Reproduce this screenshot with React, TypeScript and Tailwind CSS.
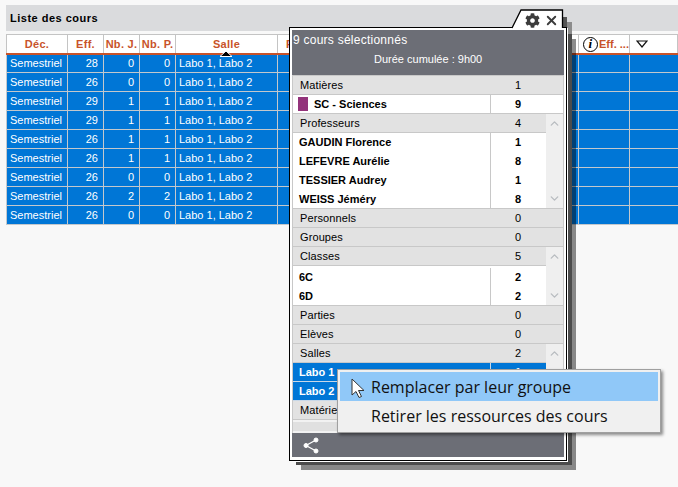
import { X, ChevronUp, ChevronDown } from 'lucide-react';
import { FaCog } from 'react-icons/fa';

const font = "font-['Liberation_Sans',Arial,sans-serif]";

const rows = [
  ['28', '0', '0'],
  ['26', '0', '0'],
  ['29', '1', '1'],
  ['29', '1', '1'],
  ['26', '1', '1'],
  ['26', '1', '1'],
  ['26', '0', '0'],
  ['26', '2', '2'],
  ['26', '0', '0'],
];

const HeadCell = ({ className, children }: { className: string; children: React.ReactNode }) => (
  <div className={`${className} flex h-full items-center justify-center border-r border-[#c4c4c4] text-[11px] font-bold tracking-[0.3px] text-[#c8532a]`}>
    {children}
  </div>
);

const BodyCell = ({ className, children }: { className?: string; children?: React.ReactNode }) => (
  <div className={`${className} flex h-full items-center border-r border-[#c4c8cc] pl-[3px] pr-[5px] text-[11px] text-white`}>
    {children}
  </div>
);

const Section = ({ label, count }: { label: string; count: string }) => (
  <div className="flex h-[19px] shrink-0 items-center border-b border-[#c8c8c8] bg-[#e2e2e2] text-[11px] tracking-[0.1px] text-black">
    <span className="w-[198px] pl-[7px]">{label}</span>
    <span className="w-[54px] text-center">{count}</span>
  </div>
);

const ItemRow = ({ label, count, selected }: { label: string; count: string; selected?: boolean }) => (
  <div className={`flex h-[19px] items-center text-[11px] font-bold ${selected ? 'border-b border-[#c8d8e8] bg-[#0076d6] text-white' : 'border-[#c8c8c8] bg-white text-black last:border-b'}`}>
    <span className={`h-full w-[198px] border-r pl-[6px] leading-[18px] ${selected ? 'border-[#c8d8e8]' : 'border-[#c8c8c8]'}`}>{label}</span>
    <span className="w-[54px] text-center">{count}</span>
  </div>
);

const ScrollBlock = ({ title, count, items, selected, listClass }: { title: string; count: string; items: [string, string][]; selected?: boolean; listClass?: string }) => (
  <div className="flex shrink-0">
    <div className="w-[253px]">
      <Section label={title} count={count} />
      <div className={listClass}>
        {items.map(([label, c]) => (
          <ItemRow key={label} label={label} count={c} selected={selected} />
        ))}
      </div>
    </div>
    <div className="flex w-[17px] flex-col items-center justify-between border-b border-[#c8c8c8] bg-[#efefef] py-[3px] text-[#b8bcc0]">
      <ChevronUp size={13} strokeWidth={2.5} />
      <ChevronDown size={13} strokeWidth={2.5} />
    </div>
  </div>
);

export default function App() {
  return (
    <div className={`${font} relative h-[487px] w-[678px] overflow-hidden bg-[#f8f8f8] pt-[5px]`}>
      <div className="ml-[6px] flex h-[26px] items-center bg-[#dadbdd] pl-[4px] text-[11px] font-bold tracking-[0.5px] text-black">
        Liste des cours
      </div>

      <div className="ml-[6px] mt-[3px]">
        <div className="flex h-[19px] border-x border-t border-[#c4c4c4] bg-white">
          <HeadCell className="w-[61px]">Déc.</HeadCell>
          <HeadCell className="w-[36px]">Eff.</HeadCell>
          <HeadCell className="w-[36px]">Nb. J.</HeadCell>
          <HeadCell className="w-[36px]">Nb. P.</HeadCell>
          <HeadCell className="w-[102px]">Salle</HeadCell>
          <HeadCell className="w-[301px]">
            <span className="mr-auto pl-[8px]">P</span>
          </HeadCell>
          <HeadCell className="w-[51px] !justify-start pl-[4px]">
            <span className="mr-[1px] flex h-[15px] w-[15px] shrink-0 items-center justify-center rounded-full border-[1.5px] border-black font-['Liberation_Serif',serif] text-[13px] font-bold italic text-black">i</span>
            <span className="tracking-normal">Eff. ...</span>
          </HeadCell>
          <div className="flex flex-1 items-center justify-center pr-[24px]">
            <svg width="12" height="8" viewBox="0 0 12 8">
              <path d="M1 1h10L6 7z" fill="none" stroke="#111" strokeWidth="1.200" />
            </svg>
          </div>
        </div>
        <div className="h-[2px] bg-[#c8532a]" />
        {rows.map((r, i) => (
          <div key={i} className={`flex border-b border-l border-[#c4c8cc] bg-[#0076d6] ${i === 0 ? 'h-[18px]' : 'h-[19px]'}`}>
            <BodyCell className="w-[61px]">Semestriel</BodyCell>
            <BodyCell className="w-[36px] justify-end">{r[0]}</BodyCell>
            <BodyCell className="w-[36px] justify-end">{r[1]}</BodyCell>
            <BodyCell className="w-[36px] justify-end">{r[2]}</BodyCell>
            <BodyCell className="w-[102px]">Labo 1, Labo 2</BodyCell>
            <BodyCell className="w-[301px]" />
            <BodyCell className="w-[51px]" />
          </div>
        ))}
      </div>

      {/* sort arrow on the Salle column */}
      <svg className="absolute left-[219px] top-[50px]" width="14" height="7" viewBox="0 0 14 7">
        <path d="M1 6.500 7 1l6 5.500z" fill="#000" stroke="#fff" strokeWidth="1" />
      </svg>

      {/* stacked shadows of the floating panel, each with its tab */}
      <div className="absolute left-[530px] top-[22px] h-[17px] w-[42px] bg-[#8c8c8c]" />
      <div className="absolute left-[301px] top-[39px] h-[431px] w-[275px] bg-[rgba(0,0,0,0.45)]" />
      <div className="absolute left-[525px] top-[17px] h-[17px] w-[42px] bg-[#555]" />
      <div className="absolute left-[296px] top-[34px] h-[431px] w-[276px] bg-[#4c4c4c]" />

      {/* floating panel */}
      <div className="absolute left-[289px] top-[27px] flex h-[434px] w-[278px] flex-col border border-black bg-white px-[2px] pb-[3px] pt-[2px] shadow-[1px_1px_0_#fff]">
        <div className="h-[45px] shrink-0 bg-[#6c6e76] text-white">
          <div className="pl-[1px] pt-[3px] text-[12px] leading-[14px] tracking-[0.25px]">9 cours sélectionnés</div>
          <div className="pl-[82px] pt-[5px] text-[11px] leading-[14px]">Durée cumulée : 9h00</div>
        </div>
        <div className="flex flex-1 flex-col border-x border-t border-[#c8c8c8] bg-[#f2f2f2]">
          <Section label="Matières" count="1" />
          <div className="flex h-[19px] shrink-0 items-center border-b border-[#c8c8c8] bg-white text-[11px] font-bold">
            <span className="flex h-full w-[198px] items-center border-r border-[#c8c8c8] pl-[5px]">
              <span className="mr-[6px] h-[14px] w-[10px] bg-[#93337b]" />
              SC - Sciences
            </span>
            <span className="w-[54px] text-center">9</span>
          </div>
          <ScrollBlock
            title="Professeurs"
            count="4"
            items={[
              ['GAUDIN Florence', '1'],
              ['LEFEVRE Aurélie', '8'],
              ['TESSIER Audrey', '1'],
              ['WEISS Jéméry', '8'],
            ]}
          />
          <Section label="Personnels" count="0" />
          <Section label="Groupes" count="0" />
          <ScrollBlock
            title="Classes"
            count="5"
            listClass="bg-white pt-[2px]"
            items={[
              ['6C', '2'],
              ['6D', '2'],
            ]}
          />
          <Section label="Parties" count="0" />
          <Section label="Elèves" count="0" />
          <ScrollBlock
            title="Salles"
            count="2"
            selected
            items={[
              ['Labo 1', '1'],
              ['Labo 2', '1'],
            ]}
          />
          <Section label="Matériel" count="0" />
          <div className="mt-[2px] h-[9px] bg-[#e0e0e0]" />
        </div>
        <div className="flex h-[24px] shrink-0 items-center bg-[#6c6e76] pl-[11px]">
          <svg width="16" height="17" viewBox="0 0 16 17" fill="#fff" stroke="#fff">
            <path d="M13 3 3 8.500l10 5.500" fill="none" strokeWidth="1.300" />
            <circle cx="13" cy="3" r="2" />
            <circle cx="3" cy="8.500" r="2" />
            <circle cx="13" cy="14" r="2" />
          </svg>
        </div>
      </div>

      {/* panel tab */}
      <svg className="absolute left-[510px] top-[9px]" width="55" height="20" viewBox="0 0 55 20">
        <path d="M2 19 11 1h41.500v18" fill="#fff" stroke="#000" strokeWidth="1.300" />
      </svg>
      <FaCog className="absolute left-[525px] top-[13px] text-[#3c3c3c]" size={15} />
      <X className="absolute left-[544px] top-[13px] text-[#3c3c3c]" size={15} strokeWidth={3} />

      {/* context menu */}
      <div className="absolute left-[337px] top-[369px] h-[64px] w-[324px] border border-[#a0a0a0] bg-[#f0f0f0] p-[2px] font-['Open_Sans',sans-serif] text-[16px] text-[#111] shadow-[2px_2px_3px_rgba(0,0,0,0.45)]">
        <div className="flex h-[29px] items-center bg-[#90c8f8] pl-[31px] pt-[1px]">Remplacer par leur groupe</div>
        <div className="flex h-[29px] items-center pl-[31px] pt-[1px]">Retirer les ressources des cours</div>
      </div>

      {/* mouse pointer */}
      <svg className="absolute left-[351px] top-[378px]" width="14" height="21" viewBox="0 0 14 21">
        <path d="M1 1v16l4-3.500 3 6 2.500-1-3-6H13z" fill="#fff" stroke="#333" strokeWidth="1" />
      </svg>
    </div>
  );
}
